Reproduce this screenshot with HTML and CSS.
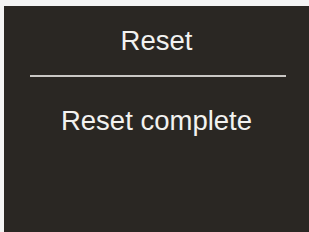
FILE: index.html
```html
<!DOCTYPE html>
<html>
<head>
<meta charset="utf-8">
<link rel="stylesheet" href="styles.css">
</head>
<body>
<div class="screen">
  <div class="title">Reset</div>
  <div class="rule"></div>
  <div class="message">Reset complete</div>
</div>
</body>
</html>
```

FILE: styles.css
```css
html, body {
  margin: 0;
  padding: 0;
  background: #f4f4f4;
  width: 309px;
  height: 232px;
  overflow: hidden;
}
.screen {
  margin: 6px 0 0 4px;
  height: 226px;
  background: #2a2723;
  color: #f2f2f0;
  font-family: "Liberation Sans", Arial, sans-serif;
  font-size: 27.5px;
  display: flex;
  flex-direction: column;
  align-items: center;
  box-sizing: border-box;
  padding-top: 19px;
}
.title {
  line-height: 31px;
}
.rule {
  align-self: stretch;
  margin: 19px 23px 0 26px;
  height: 2px;
  background: #c9c7c4;
}
.message {
  line-height: 31px;
  margin-top: 28px;
}
```
